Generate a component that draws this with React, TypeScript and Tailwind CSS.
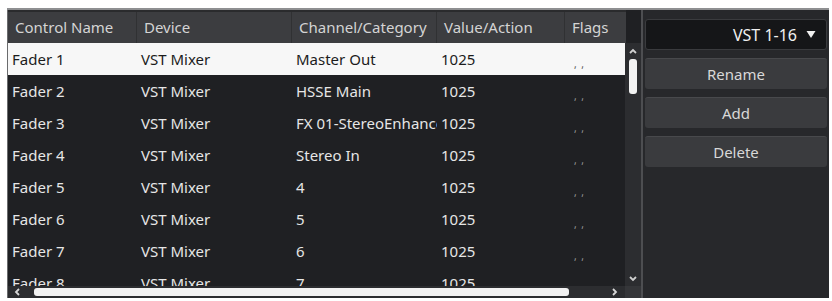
import React from "react";

const rows = [
  ["Fader 1", "VST Mixer", "Master Out", "1025"],
  ["Fader 2", "VST Mixer", "HSSE Main", "1025"],
  ["Fader 3", "VST Mixer", "FX 01-StereoEnhancer", "1025"],
  ["Fader 4", "VST Mixer", "Stereo In", "1025"],
  ["Fader 5", "VST Mixer", "4", "1025"],
  ["Fader 6", "VST Mixer", "5", "1025"],
  ["Fader 7", "VST Mixer", "6", "1025"],
  ["Fader 8", "VST Mixer", "7", "1025"],
];

const cols = "grid grid-cols-[129px_155px_145px_128px_61px]";

export default function App() {
  return (
    <div
      className="w-[832px] h-[301px] bg-white pt-[8px] pl-[7px] overflow-hidden"
      style={{ fontFamily: '"Noto Sans", "Open Sans", sans-serif' }}
    >
      <div className="flex w-[822px] h-[290px] border-t-2 border-[#8e8f91] bg-[#1f2023]">
        {/* table */}
        <div className="flex flex-col w-[634px] border-l border-[#6a6b6d]">
          <div className={`${cols} h-[33px] bg-[#3c3d40] text-[15px] text-[#d4d4d4] border-t-2 border-[#2a2b2d] w-[618px]`}>
            {["Control Name", "Device", "Channel/Category", "Value/Action", "Flags"].map((h, i) => (
              <div
                key={h}
                className={`flex items-center pl-[7px] whitespace-nowrap overflow-hidden ${i < 4 ? "border-r border-[#303133]" : ""}`}
              >
                {h}
              </div>
            ))}
          </div>
          <div className="flex flex-1 min-h-0">
            <div className="w-[618px] overflow-hidden">
              {rows.map((r, i) => (
                <div
                  key={i}
                  className={`${cols} h-[32px] text-[15px] ${
                    i === 0 ? "bg-[#f7f7f7] text-[#1c1c1c]" : "text-[#e6e6e6]"
                  }`}
                >
                  {r.map((c, j) => (
                    <div key={j} className="flex items-center pl-[4px] whitespace-nowrap overflow-hidden">
                      {c}
                    </div>
                  ))}
                  <div className={`flex items-center pl-[9px] pt-[10px] text-[10px] tracking-[1px] ${i === 0 ? "text-[#555]" : "text-[#9a9a9a]"}`}>
                    , ,
                  </div>
                </div>
              ))}
            </div>
            <div className="w-[16px] bg-[#2c2d30] flex flex-col items-center pt-[3px] pb-[3px]">
              <svg width="10" height="8" viewBox="0 0 10 8" className="mt-[1px]">
                <path d="M2 6 L5 3 L8 6" stroke="#cfcfcf" strokeWidth="1.8" fill="none" />
              </svg>
              <div className="w-[8px] h-[35px] bg-[#f2f2f2] rounded-[3px] mt-[4px]" />
              <div className="flex-1" />
              <svg width="10" height="8" viewBox="0 0 10 8">
                <path d="M2 2 L5 5 L8 2" stroke="#cfcfcf" strokeWidth="1.8" fill="none" />
              </svg>
            </div>
          </div>
          <div className="flex h-[12px]">
            <div className="w-[618px] bg-[#2c2d30] flex items-center pl-[5px] pr-[6px]">
              <svg width="8" height="10" viewBox="0 0 8 10">
                <path d="M6 2 L3 5 L6 8" stroke="#d8d8d8" strokeWidth="1.8" fill="none" />
              </svg>
              <div className="ml-[13px] w-[535px] h-[8px] bg-[#f2f2f2] rounded-[3px]" />
              <div className="flex-1" />
              <svg width="8" height="10" viewBox="0 0 8 10">
                <path d="M2 2 L5 5 L2 8" stroke="#d8d8d8" strokeWidth="1.8" fill="none" />
              </svg>
            </div>
            <div className="w-[16px] bg-[#353639]" />
          </div>
        </div>
        <div className="w-[2px] bg-[#4d4e51]" />
        {/* right panel */}
        <div className="flex-1 bg-[#27282b] px-[2px] pt-[9px] flex flex-col gap-[8px]">
          <div className="h-[31px] bg-[#151618] border border-[#3a3b3e] rounded-[3px] flex items-center justify-end pr-[10px] text-[16px] text-[#f0f0f0]">
            <span>VST 1-16</span>
            <svg width="10" height="9" viewBox="0 0 10 9" className="ml-[9px]">
              <path d="M0.5 1 L9.5 1 L5 8 Z" fill="#f0f0f0" />
            </svg>
          </div>
          {["Rename", "Add", "Delete"].map((b) => (
            <div
              key={b}
              className="h-[31px] bg-[#3a3b3e] border-t border-[#48494c] rounded-[3px] flex items-center justify-center text-[15px] text-[#d8d8d8]"
            >
              {b}
            </div>
          ))}
        </div>
      </div>
    </div>
  );
}
